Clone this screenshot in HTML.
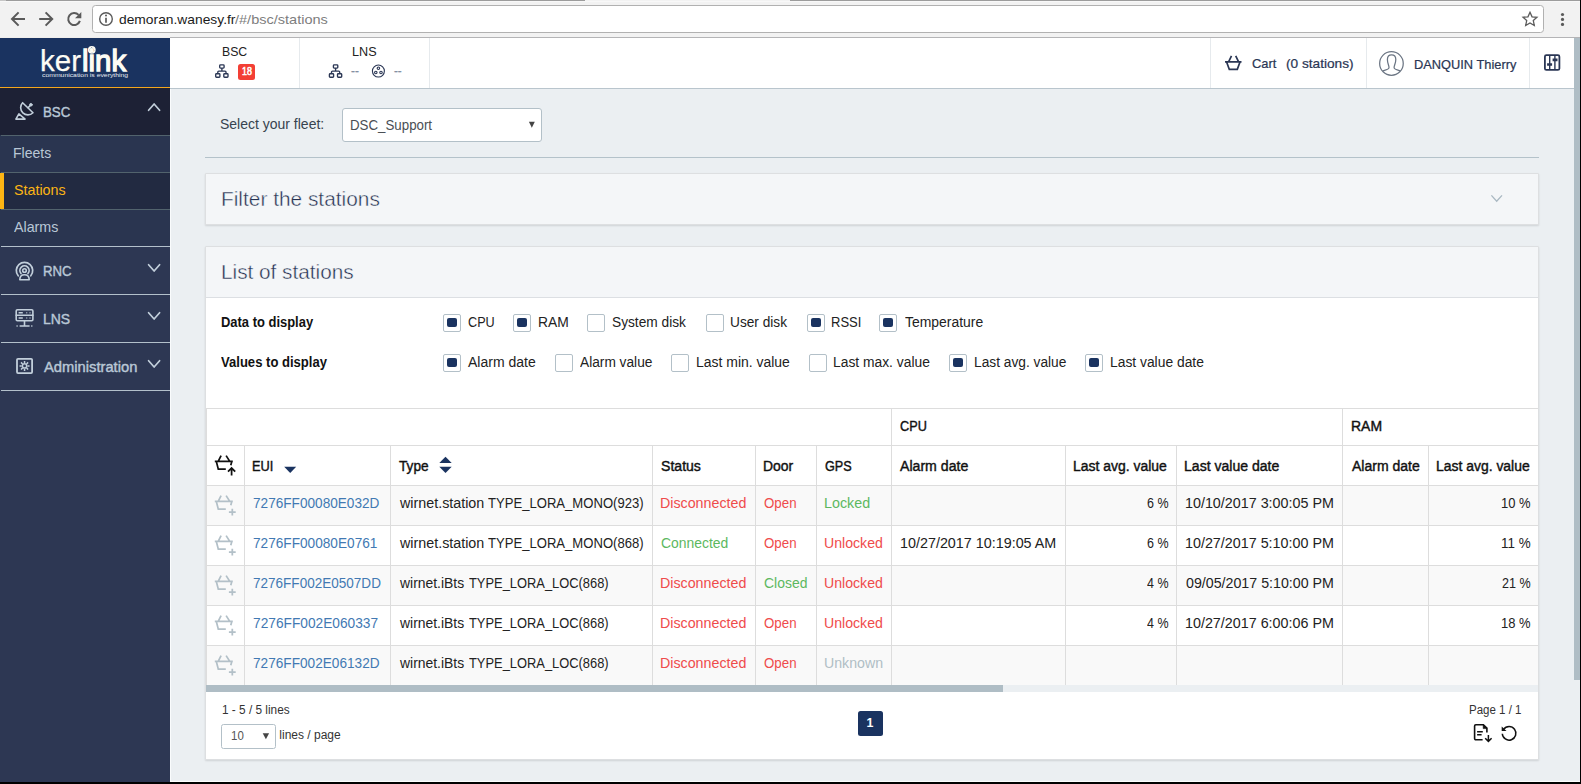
<!DOCTYPE html>
<html lang="en"><head><meta charset="utf-8"><title>Wanesy - Stations</title>
<style>
html,body{margin:0;padding:0;}
body{width:1581px;height:784px;overflow:hidden;position:relative;background:#ebeff2;font-family:"Liberation Sans",sans-serif;}
.a{position:absolute;box-sizing:border-box;}
.t{position:absolute;white-space:nowrap;line-height:1;transform-origin:0 50%;font-family:"Liberation Sans",sans-serif;}
svg{position:absolute;overflow:visible;}
.cb{position:absolute;box-sizing:border-box;width:18px;height:18px;border:1px solid #b3c0c8;border-radius:2px;background:#fff;}
.cb.on::after{content:"";position:absolute;left:3px;top:3.2px;width:9.8px;height:9.2px;border-radius:2px;background:#1a3360;}
.vl{position:absolute;width:1px;background:#ddd;}
.hl{position:absolute;height:1px;background:#ddd;}

</style></head>
<body>
<!-- ================= browser chrome ================= -->
<div class="a" style="left:0px;top:0px;width:1581px;height:38px;background:#f2f2f2;"></div>
<div class="a" style="left:0px;top:0px;width:6px;height:1px;background:#c6c6c6;"></div>
<div class="a" style="left:6px;top:0px;width:579px;height:1px;background:#9c9c9c;"></div>
<div class="a" style="left:790px;top:0px;width:790px;height:1px;background:#9c9c9c;"></div>
<div class="a" style="left:0px;top:1px;width:1580px;height:1px;background:#f8f8f8;"></div>
<div class="a" style="left:0px;top:37px;width:170px;height:1px;background:#f0eeec;"></div>
<div class="a" style="left:170px;top:37px;width:1411px;height:1px;background:#b4b4b6;"></div>
<div class="a" style="left:92px;top:5px;width:1452px;height:28px;background:#fff;border:1px solid #b1b1b1;border-radius:3.5px;"></div>
<svg style="left:0;top:0;" width="1581" height="38" viewBox="0 0 1581 38" fill="none" stroke="#5a5a5a" stroke-width="2">
  <path d="M25 19H12.400M18.600 12.400L12 19l6.600 6.600"/>
  <path d="M39.200 19H51.800M45.600 12.400L52.200 19l-6.600 6.600"/>
  <path d="M78.600 14.900A6 6 0 1 0 79.900 20.900"/>
  <path d="M81.300 12v6.300h-6.300z" fill="#5a5a5a" stroke="none"/>
  <circle cx="106" cy="19" r="6.300" stroke-width="1.400"/>
  <path d="M106 17.700v5" stroke-width="1.700"/>
  <circle cx="106" cy="15.400" r="1" fill="#5a5a5a" stroke="none"/>
  <path d="M1530 12.300l2.050 4.500 4.900.500-3.650 3.300 1 4.850-4.300-2.500-4.300 2.500 1-4.850-3.650-3.300 4.900-.500z" stroke-width="1.300"/>
  <g fill="#5a5a5a" stroke="none"><circle cx="1562.500" cy="14.500" r="1.600"/><circle cx="1562.500" cy="19.400" r="1.600"/><circle cx="1562.500" cy="24.400" r="1.600"/></g>
</svg>
<!-- ================= sidebar ================= -->
<div class="a" style="left:0px;top:38px;width:170px;height:49px;background:#1a3360;"></div>
<div class="a" style="left:0px;top:87px;width:170px;height:1px;background:#f3a71d;"></div>
<div class="a" style="left:0px;top:88px;width:170px;height:47px;background:#1d2135;"></div>
<div class="a" style="left:0px;top:135px;width:170px;height:112px;background:#2a3550;"></div>
<div class="a" style="left:0px;top:173px;width:170px;height:36px;background:#222a41;"></div>
<div class="a" style="left:0px;top:173px;width:4px;height:36px;background:#fcb514;"></div>
<div class="a" style="left:0px;top:247px;width:170px;height:535px;background:#2d3753;"></div>
<div class="a" style="left:1px;top:135px;width:169px;height:1px;background:#52636d;"></div>
<div class="a" style="left:1px;top:172px;width:169px;height:1px;background:#52636d;"></div>
<div class="a" style="left:1px;top:209px;width:169px;height:1px;background:#52636d;"></div>
<div class="a" style="left:1px;top:246px;width:169px;height:1px;background:#b3c0cb;"></div>
<div class="a" style="left:1px;top:294px;width:169px;height:1px;background:#b3c0cb;"></div>
<div class="a" style="left:1px;top:342px;width:169px;height:1px;background:#b3c0cb;"></div>
<div class="a" style="left:1px;top:390px;width:169px;height:1px;background:#b3c0cb;"></div>
<svg style="left:87px;top:45px;" width="10" height="10" viewBox="0 0 10 10"><circle cx="4.800" cy="4.800" r="3.900" fill="#fdfcf4"/><path d="M3 4.200l1.600-1.400 1.800 1.200.400 2-1.800 1-1.600-1z" fill="none" stroke="#1a3360" stroke-width=".700"/></svg>
<svg style="left:0;top:88px;" width="170" height="310" viewBox="0 88 170 310" fill="none" stroke="#c2cfdb" stroke-width="1.600" stroke-linecap="round" stroke-linejoin="round">
  <!-- satellite dish -->
  <path d="M22.600 102.700A7.250 7.250 0 0 0 33 112.800z"/>
  <path d="M28.200 107.600l2.200-2.300"/><circle cx="30.900" cy="104.800" r="1.300" fill="#c2cfdb" stroke-width="1"/>
  <path d="M18.900 113.900l-3 5.200h9.200z"/>
  <!-- chevrons -->
  <path d="M148.600 110.300l5.500-6.300 5.500 6.300" stroke-width="1.700"/>
  <path d="M148.600 264.700l5.500 6.300 5.500-6.300" stroke-width="1.700"/>
  <path d="M148.600 312.700l5.500 6.300 5.500-6.300" stroke-width="1.700"/>
  <path d="M148.600 360.700l5.500 6.300 5.500-6.300" stroke-width="1.700"/>
  <!-- RNC -->
  <circle cx="24.500" cy="270.500" r="1.800" stroke-width="1.600"/>
  <path d="M21 273.500A4.600 4.600 0 1 1 28 273.500" stroke-width="1.700"/>
  <path d="M18.200 275.800A8.200 8.200 0 1 1 30.800 275.800" stroke-width="1.700"/>
  <path d="M19.800 279.800C19.800 276.500 21.800 274.700 24.500 274.700S29.200 276.500 29.200 279.800z"/>
  <!-- LNS -->
  <rect x="16.200" y="309.700" width="16.700" height="11.100" rx="1.200"/>
  <path d="M16.200 315.250h16.700"/>
  <path d="M18.600 312.700h4.200M26.400 312.700h.8M29.600 312.700h.8M18.600 318h4.200M26.400 318h.8M29.600 318h.8" stroke-width="1.400" stroke-linecap="butt"/>
  <path d="M24.500 320.800v4.600M19.600 326h10M16.500 326h1.200M31.200 326h1.200" stroke-linecap="butt"/>
  <!-- Administration -->
  <rect x="17" y="358.800" width="15.100" height="14.300" rx="1" stroke-width="1.800"/>
  <circle cx="24.550" cy="365.900" r="2.100" stroke-width="1.400"/>
  <g stroke-width="1.500" stroke-linecap="butt"><path d="M24.550 360.900v2.200M24.550 368.700v2.200M19.550 365.900h2.200M27.350 365.900h2.200M21 362.350l1.560 1.560M26.540 367.890l1.560 1.560M28.100 362.350l-1.560 1.560M22.560 367.890l-1.560 1.560"/></g>
</svg>
<!-- ================= header ================= -->
<div class="a" style="left:170px;top:38px;width:1404px;height:50px;background:#fff;"></div>
<div class="a" style="left:170px;top:88px;width:1404px;height:1px;background:#b9c5cd;"></div>
<div class="a" style="left:299px;top:38px;width:1px;height:50px;background:#e6eaed;"></div>
<div class="a" style="left:429px;top:38px;width:1px;height:50px;background:#e6eaed;"></div>
<div class="a" style="left:1210px;top:38px;width:1px;height:50px;background:#e6eaed;"></div>
<div class="a" style="left:1366px;top:38px;width:1px;height:50px;background:#e6eaed;"></div>
<div class="a" style="left:1529px;top:38px;width:1px;height:50px;background:#e6eaed;"></div>
<div class="a" style="left:238px;top:64px;width:17px;height:16px;background:#f33f35;border-radius:2.500px;"></div>
<svg style="left:170px;top:38px;" width="1404" height="50" viewBox="170 38 1404 50" fill="none" stroke="#2a3654" stroke-width="1.350">
  <g><rect x="219.700" y="64.900" width="4.400" height="3.200" rx=".800"/><rect x="215.700" y="73.700" width="4.200" height="3.500" rx=".800"/><rect x="223.800" y="73.700" width="4.200" height="3.500" rx=".800"/><path d="M221.900 68.100v3M217.800 73.700v-1.600a1 1 0 0 1 1-1h6.200a1 1 0 0 1 1 1v1.600"/></g>
  <g transform="translate(113.700 0)"><rect x="219.700" y="64.900" width="4.400" height="3.200" rx=".800"/><rect x="215.700" y="73.700" width="4.200" height="3.500" rx=".800"/><rect x="223.800" y="73.700" width="4.200" height="3.500" rx=".800"/><path d="M221.900 68.100v3M217.800 73.700v-1.600a1 1 0 0 1 1-1h6.200a1 1 0 0 1 1 1v1.600"/></g>
  <circle cx="378.400" cy="71.050" r="6" stroke-width="1.100"/>
  <g stroke-width="1.100"><circle cx="378.400" cy="68.300" r="1.250"/><circle cx="375.800" cy="72.500" r="1.250"/><circle cx="381" cy="72.500" r="1.250"/></g>
  <!-- cart -->
  <path d="M1225 61.900h16.500M1226.600 62l2.700 7.300h8l2.700-7.300M1228.700 61.600l2.800-5.800M1238.500 61.600l-2.800-5.800" stroke-width="1.700"/>
  <!-- user -->
  <g stroke="#6b7583" stroke-width="1.250"><circle cx="1391.450" cy="63.450" r="11.800"/>
  <path d="M1382.900 70.900C1385 69.900 1388.900 69.600 1389 67.700C1389.100 65.600 1387.400 63.500 1387.400 59.400C1387.400 56.200 1389 54.800 1391.600 54.800S1395.800 56.200 1395.800 59.400C1395.800 63.500 1394 65.600 1394.100 67.700C1394.200 69.600 1398.200 69.900 1400.300 70.900"/></g>
  <!-- sliders icon -->
  <rect x="1544.900" y="55.200" width="14.500" height="14.700" rx="1.500" stroke-width="1.800"/>
  <path d="M1549.700 55.500v14.200M1554.900 55.500v14.200" stroke-width="1.400"/>
  <path d="M1552.600 59.900h4.900M1547.100 64.500h5" stroke-width="2.600"/>
</svg>
<div class="a" style="left:170px;top:89px;width:1px;height:693px;background:#fafcfd;"></div>
<!-- ================= page scrollbar / edges ================= -->
<div class="a" style="left:1574px;top:38px;width:6px;height:642px;background:#afbdc5;"></div>
<div class="a" style="left:1580px;top:0px;width:1px;height:784px;background:#000;"></div>
<div class="a" style="left:170px;top:781px;width:1410px;height:1px;background:#fcfdfd;"></div>
<div class="a" style="left:0px;top:782px;width:1581px;height:2px;background:#000;"></div>
<!-- ================= main ================= -->
<div class="a" style="left:342px;top:108px;width:200px;height:34px;background:#fff;border:1px solid #b3c0c8;border-radius:3px;"></div>
<svg style="left:528px;top:121px;" width="8" height="8" viewBox="0 0 8 8"><path d="M.900.800h5.900L3.850 6.800z" fill="#444"/></svg>
<div class="a" style="left:205px;top:157px;width:1334px;height:1px;background:#b4c2ca;"></div>
<div class="a" style="left:205px;top:173px;width:1334px;height:52px;background:#f4f6f8;border:1px solid #dddfe1;border-radius:1px;box-shadow:0 1px 2px rgba(0,0,0,.12);"></div>
<svg style="left:1488px;top:192px;" width="18" height="14" viewBox="1488 192 18 14" fill="none" stroke="#a9b8c2" stroke-width="1.300"><path d="M1491.400 195.400l5.300 5.900 5.300-5.900"/></svg>
<div class="a" style="left:205px;top:246px;width:1334px;height:514px;background:#fff;border:1px solid #dddfe1;border-radius:1px;box-shadow:0 1px 2px rgba(0,0,0,.12);"></div>
<div class="a" style="left:206px;top:247px;width:1332px;height:50px;background:#f4f6f8;"></div>
<div class="a" style="left:206px;top:297px;width:1332px;height:1px;background:#dcdfe3;"></div>
<!-- checkboxes -->
<div class="cb on" style="left:443px;top:314px;"></div>
<div class="cb on" style="left:513px;top:314px;"></div>
<div class="cb" style="left:587px;top:314px;"></div>
<div class="cb" style="left:706px;top:314px;"></div>
<div class="cb on" style="left:807px;top:314px;"></div>
<div class="cb on" style="left:879px;top:314px;"></div>
<div class="cb on" style="left:443px;top:354px;"></div>
<div class="cb" style="left:555px;top:354px;"></div>
<div class="cb" style="left:671px;top:354px;"></div>
<div class="cb" style="left:809px;top:354px;"></div>
<div class="cb on" style="left:949px;top:354px;"></div>
<div class="cb on" style="left:1085px;top:354px;"></div>
<!-- table -->
<div class="a" style="left:207px;top:486px;width:1331px;height:39px;background:#f9f9f9;"></div>
<div class="a" style="left:207px;top:566px;width:1331px;height:39px;background:#f9f9f9;"></div>
<div class="a" style="left:207px;top:646px;width:1331px;height:39px;background:#f9f9f9;"></div>
<div class="hl" style="left:206px;top:408px;width:1332px;"></div>
<div class="hl" style="left:206px;top:445px;width:1332px;"></div>
<div class="hl" style="left:206px;top:485px;width:1332px;"></div>
<div class="hl" style="left:206px;top:525px;width:1332px;"></div>
<div class="hl" style="left:206px;top:565px;width:1332px;"></div>
<div class="hl" style="left:206px;top:605px;width:1332px;"></div>
<div class="hl" style="left:206px;top:645px;width:1332px;"></div>
<div class="hl" style="left:206px;top:685px;width:1332px;"></div>
<div class="vl" style="left:206px;top:408px;height:277px;"></div>
<div class="vl" style="left:244px;top:445px;height:240px;"></div>
<div class="vl" style="left:390px;top:445px;height:240px;"></div>
<div class="vl" style="left:652px;top:445px;height:240px;"></div>
<div class="vl" style="left:755px;top:445px;height:240px;"></div>
<div class="vl" style="left:816px;top:445px;height:240px;"></div>
<div class="vl" style="left:891px;top:408px;height:277px;"></div>
<div class="vl" style="left:1065px;top:445px;height:240px;"></div>
<div class="vl" style="left:1176px;top:445px;height:240px;"></div>
<div class="vl" style="left:1342px;top:408px;height:277px;"></div>
<div class="vl" style="left:1428px;top:445px;height:240px;"></div>
<div class="a" style="left:206px;top:685px;width:1332px;height:7px;background:#ebeff2;"></div>
<div class="a" style="left:206px;top:685px;width:797px;height:7px;background:#afbdc5;"></div>
<svg style="left:280px;top:452px;" width="180" height="26" viewBox="280 452 180 26" fill="#1a3360"><path d="M284.200 466.800h12l-6 6.200z"/><path d="M439.300 463h12.400l-6.200-6.200z"/><path d="M439.300 466.800h12.400l-6.200 6.200z"/></svg>
<svg style="left:212px;top:452.7px;" width="28" height="26" viewBox="212 452.7 28 26" fill="none" stroke="#111" stroke-width="1.750"><path d="M214.800 461.1H232.800M218.200 461.1L221.100 455.3M229.800 461.1L226.100 455.3M216.300 461.1L218.300 468.9H225.800M231.800 461.1L230.800 465.0"/><path d="M231.600 475.1V468.1M228 471.4L231.600 467.8L235.200 471.4"/></svg>
<svg style="left:212px;top:493.0px;" width="28" height="26" viewBox="212 493.0 28 26" fill="none" stroke="#b3c0c8" stroke-width="1.750"><path d="M214.800 501.4H232.800M218.200 501.4L221.100 495.6M229.800 501.4L226.100 495.6M216.300 501.4L218.300 509.2H225.800M231.800 501.4L230.800 505.3"/><path d="M228.900 512.1H235.700M232.300 508.7V515.5"/></svg>
<svg style="left:212px;top:533.0px;" width="28" height="26" viewBox="212 533.0 28 26" fill="none" stroke="#b3c0c8" stroke-width="1.750"><path d="M214.800 541.4H232.800M218.200 541.4L221.100 535.6M229.800 541.4L226.100 535.6M216.300 541.4L218.300 549.2H225.800M231.800 541.4L230.800 545.3"/><path d="M228.900 552.1H235.700M232.300 548.7V555.5"/></svg>
<svg style="left:212px;top:573.0px;" width="28" height="26" viewBox="212 573.0 28 26" fill="none" stroke="#b3c0c8" stroke-width="1.750"><path d="M214.800 581.4H232.800M218.200 581.4L221.100 575.6M229.800 581.4L226.100 575.6M216.300 581.4L218.300 589.2H225.800M231.800 581.4L230.800 585.3"/><path d="M228.900 592.1H235.700M232.300 588.7V595.5"/></svg>
<svg style="left:212px;top:613.0px;" width="28" height="26" viewBox="212 613.0 28 26" fill="none" stroke="#b3c0c8" stroke-width="1.750"><path d="M214.800 621.4H232.800M218.200 621.4L221.100 615.6M229.800 621.4L226.100 615.6M216.300 621.4L218.300 629.2H225.800M231.800 621.4L230.800 625.3"/><path d="M228.900 632.1H235.700M232.300 628.7V635.5"/></svg>
<svg style="left:212px;top:653.0px;" width="28" height="26" viewBox="212 653.0 28 26" fill="none" stroke="#b3c0c8" stroke-width="1.750"><path d="M214.800 661.4H232.800M218.200 661.4L221.100 655.6M229.800 661.4L226.100 655.6M216.300 661.4L218.300 669.2H225.800M231.800 661.4L230.800 665.3"/><path d="M228.900 672.1H235.700M232.300 668.7V675.5"/></svg>
<!-- footer -->
<div class="a" style="left:221px;top:724px;width:55px;height:25px;background:#fff;border:1px solid #b3c0c8;border-radius:2.500px;"></div>
<svg style="left:262px;top:732px;" width="8" height="8" viewBox="0 0 8 8"><path d="M.700 1.200h6.400L3.900 7.200z" fill="#444"/></svg>
<div class="a" style="left:858px;top:711px;width:25px;height:25px;background:#1a3360;border-radius:2.500px;"></div>
<svg style="left:1470px;top:720px;" width="52" height="26" viewBox="1470 720 52 26" fill="none" stroke="#111" stroke-width="1.600">
<path d="M1482.600 739.800h-6.800a1.200 1.200 0 0 1-1.200-1.200v-12.600a1.200 1.200 0 0 1 1.200-1.200h7.600l3.500 3.300v4.500"/>
<path d="M1483.200 724.900v3.700h3.700z" fill="#111" stroke-width=".600"/>
<path d="M1477.100 731.700h5.700M1477.100 734.700h4.500" stroke-width="1.400"/>
<path d="M1488.400 735.100v6M1485.200 738.300l3.200 3.100 3.200-3.100" stroke-width="1.500"/>
<path d="M1502.300 733.700A6.800 6.800 0 1 0 1503.600 729.300" stroke-width="1.500"/>
<path d="M1501.700 726.500v4.600h4.800z" fill="#111" stroke="none"/>
</svg>

<div id="txt">
<span class="t" style="left:119.30px;top:13.04px;font-size:13.3px;color:#1b1b1b;transform:scaleX(1.0385);">demoran.wanesy.fr</span><span class="t" style="left:235.00px;top:13.04px;font-size:13.3px;color:#7d7d7d;transform:scaleX(1.0920);">/#/bsc/stations</span>
<span class="t" style="left:40.01px;top:45.54px;font-size:29.6px;color:#fdfcf4;transform:scaleX(0.9960);-webkit-text-stroke:0.25px #fdfcf4;">ker</span><span class="t" style="left:82.21px;top:45.54px;font-size:29.6px;color:#fdfcf4;transform:scaleX(0.9928);-webkit-text-stroke:1.3px #fdfcf4;">link</span>
<span class="t" style="left:42.10px;top:72.99px;font-size:5.8px;color:#e8ecf2;transform:scaleX(1.1781);">communication is everything</span>
<span class="t" style="left:221.86px;top:44.80px;font-size:13px;color:#222;transform:scaleX(0.9431);">BSC</span>
<span class="t" style="left:241.70px;top:65.93px;font-size:10.6px;color:#fff;transform:scaleX(0.8409);-webkit-text-stroke:0.55px #fff;">18</span>
<span class="t" style="left:351.73px;top:44.80px;font-size:13px;color:#222;transform:scaleX(0.9708);">LNS</span>
<span class="t" style="left:351.30px;top:63.80px;font-size:13px;color:#838fa1;transform:scaleX(0.9005);-webkit-text-stroke:0.3px #838fa1;">--</span>
<span class="t" style="left:394.40px;top:63.80px;font-size:13px;color:#838fa1;transform:scaleX(0.8885);-webkit-text-stroke:0.3px #838fa1;">--</span>
<span class="t" style="left:1251.90px;top:56.60px;font-size:13px;color:#2a3654;transform:scaleX(0.9901);-webkit-text-stroke:0.22px #2a3654;">Cart</span>
<span class="t" style="left:1286.00px;top:56.60px;font-size:13px;color:#2a3654;transform:scaleX(1.0504);-webkit-text-stroke:0.22px #2a3654;">(0 stations)</span>
<span class="t" style="left:1413.51px;top:58.00px;font-size:13px;color:#2a3654;transform:scaleX(0.9864);-webkit-text-stroke:0.22px #2a3654;">DANQUIN Thierry</span>
<span class="t" style="left:42.80px;top:105.05px;font-size:14px;color:#b9c7d6;transform:scaleX(0.9503);-webkit-text-stroke:0.4px #b9c7d6;">BSC</span>
<span class="t" style="left:13.43px;top:146.03px;font-size:14.5px;color:#b9c7d6;transform:scaleX(0.9677);">Fleets</span>
<span class="t" style="left:14.30px;top:182.63px;font-size:14.5px;color:#fcb514;transform:scaleX(0.9858);">Stations</span>
<span class="t" style="left:14.20px;top:219.63px;font-size:14.5px;color:#b9c7d6;transform:scaleX(0.9830);">Alarms</span>
<span class="t" style="left:42.76px;top:264.15px;font-size:14px;color:#b9c7d6;transform:scaleX(0.9411);-webkit-text-stroke:0.4px #b9c7d6;">RNC</span>
<span class="t" style="left:42.70px;top:312.35px;font-size:14px;color:#b9c7d6;transform:scaleX(0.9963);-webkit-text-stroke:0.4px #b9c7d6;">LNS</span>
<span class="t" style="left:43.70px;top:359.95px;font-size:14px;color:#b9c7d6;transform:scaleX(1.0521);-webkit-text-stroke:0.4px #b9c7d6;">Administration</span>
<span class="t" style="left:220.10px;top:117.25px;font-size:14px;color:#37434f;transform:scaleX(0.9992);">Select your fleet:</span>
<span class="t" style="left:349.95px;top:118.15px;font-size:14px;color:#4a4f55;transform:scaleX(0.9498);">DSC_Support</span>
<span class="t" style="left:221.08px;top:188.73px;font-size:20.4px;color:#243050;transform:scaleX(1.0229);-webkit-text-stroke:0.42px #f4f6f8;">Filter the stations</span>
<span class="t" style="left:221.08px;top:261.93px;font-size:20.4px;color:#243050;transform:scaleX(1.0175);-webkit-text-stroke:0.42px #f4f6f8;">List of stations</span>
<span class="t" style="left:221.40px;top:314.95px;font-size:14px;color:#111;font-weight:700;transform:scaleX(0.9249);">Data to display</span>
<span class="t" style="left:221.40px;top:354.95px;font-size:14px;color:#111;font-weight:700;transform:scaleX(0.9331);">Values to display</span>
<span class="t" style="left:468.00px;top:314.95px;font-size:14px;color:#222;transform:scaleX(0.9033);">CPU</span>
<span class="t" style="left:537.91px;top:314.95px;font-size:14px;color:#222;transform:scaleX(0.9882);">RAM</span>
<span class="t" style="left:612.10px;top:314.95px;font-size:14px;color:#222;transform:scaleX(0.9796);">System disk</span>
<span class="t" style="left:730.02px;top:314.95px;font-size:14px;color:#222;transform:scaleX(0.9770);">User disk</span>
<span class="t" style="left:830.77px;top:314.95px;font-size:14px;color:#222;transform:scaleX(0.9290);">RSSI</span>
<span class="t" style="left:904.80px;top:314.95px;font-size:14px;color:#222;transform:scaleX(0.9948);">Temperature</span>
<span class="t" style="left:468.00px;top:354.95px;font-size:14px;color:#222;">Alarm date</span>
<span class="t" style="left:580.00px;top:354.95px;font-size:14px;color:#222;transform:scaleX(0.9793);">Alarm value</span>
<span class="t" style="left:695.90px;top:354.95px;font-size:14px;color:#222;transform:scaleX(0.9971);">Last min. value</span>
<span class="t" style="left:833.31px;top:354.95px;font-size:14px;color:#222;transform:scaleX(0.9881);">Last max. value</span>
<span class="t" style="left:973.62px;top:354.95px;font-size:14px;color:#222;transform:scaleX(0.9809);">Last avg. value</span>
<span class="t" style="left:1110.01px;top:354.95px;font-size:14px;color:#222;transform:scaleX(0.9886);">Last value date</span>
<span class="t" style="left:900.20px;top:418.85px;font-size:14px;color:#111;transform:scaleX(0.9067);-webkit-text-stroke:0.4px #111;">CPU</span>
<span class="t" style="left:1350.50px;top:418.85px;font-size:14px;color:#111;transform:scaleX(0.9984);-webkit-text-stroke:0.4px #111;">RAM</span>
<span class="t" style="left:252.29px;top:459.15px;font-size:14px;color:#111;transform:scaleX(0.9138);-webkit-text-stroke:0.4px #111;">EUI</span>
<span class="t" style="left:399.00px;top:459.15px;font-size:14px;color:#111;transform:scaleX(0.9750);-webkit-text-stroke:0.4px #111;">Type</span>
<span class="t" style="left:661.10px;top:459.15px;font-size:14px;color:#111;transform:scaleX(1.0053);-webkit-text-stroke:0.4px #111;">Status</span>
<span class="t" style="left:763.41px;top:459.15px;font-size:14px;color:#111;transform:scaleX(0.9938);-webkit-text-stroke:0.4px #111;">Door</span>
<span class="t" style="left:825.40px;top:459.15px;font-size:14px;color:#111;transform:scaleX(0.9033);-webkit-text-stroke:0.4px #111;">GPS</span>
<span class="t" style="left:900.20px;top:459.15px;font-size:14px;color:#111;transform:scaleX(1.0087);-webkit-text-stroke:0.4px #111;">Alarm date</span>
<span class="t" style="left:1073.40px;top:459.15px;font-size:14px;color:#111;transform:scaleX(0.9969);-webkit-text-stroke:0.4px #111;">Last avg. value</span>
<span class="t" style="left:1184.20px;top:459.15px;font-size:14px;color:#111;transform:scaleX(1.0035);-webkit-text-stroke:0.4px #111;">Last value date</span>
<span class="t" style="left:1351.50px;top:459.15px;font-size:14px;color:#111;transform:scaleX(1.0013);-webkit-text-stroke:0.4px #111;">Alarm date</span>
<span class="t" style="left:1436.41px;top:459.15px;font-size:14px;color:#111;transform:scaleX(0.9948);-webkit-text-stroke:0.4px #111;">Last avg. value</span>
<span class="t" style="left:253.10px;top:495.95px;font-size:14px;color:#4279b3;transform:scaleX(0.9725);">7276FF00080E032D</span>
<span class="t" style="left:400.02px;top:495.95px;font-size:14px;color:#222;transform:scaleX(1.0218);">wirnet.station</span>
<span class="t" style="left:487.60px;top:495.95px;font-size:14px;color:#222;transform:scaleX(0.9347);">TYPE_LORA_MONO(923)</span>
<span class="t" style="left:660.08px;top:495.95px;font-size:14px;color:#ef4b4b;transform:scaleX(1.0176);">Disconnected</span>
<span class="t" style="left:764.40px;top:495.95px;font-size:14px;color:#ef4b4b;transform:scaleX(0.9503);">Open</span>
<span class="t" style="left:824.38px;top:495.95px;font-size:14px;color:#5cb860;transform:scaleX(1.0217);">Locked</span>
<span class="t" style="left:1146.70px;top:495.95px;font-size:14px;color:#222;transform:scaleX(0.8912);">6 %</span>
<span class="t" style="left:1184.58px;top:495.95px;font-size:14px;color:#222;transform:scaleX(1.0230);">10/10/2017 3:00:05 PM</span>
<span class="t" style="left:1501.47px;top:495.95px;font-size:14px;color:#222;transform:scaleX(0.9257);">10 %</span>
<span class="t" style="left:253.10px;top:535.95px;font-size:14px;color:#4279b3;transform:scaleX(0.9744);">7276FF00080E0761</span>
<span class="t" style="left:400.02px;top:535.95px;font-size:14px;color:#222;transform:scaleX(1.0218);">wirnet.station</span>
<span class="t" style="left:487.60px;top:535.95px;font-size:14px;color:#222;transform:scaleX(0.9347);">TYPE_LORA_MONO(868)</span>
<span class="t" style="left:661.10px;top:535.95px;font-size:14px;color:#5cb860;transform:scaleX(0.9936);">Connected</span>
<span class="t" style="left:764.40px;top:535.95px;font-size:14px;color:#ef4b4b;transform:scaleX(0.9503);">Open</span>
<span class="t" style="left:824.39px;top:535.95px;font-size:14px;color:#ef4b4b;transform:scaleX(1.0092);">Unlocked</span>
<span class="t" style="left:899.68px;top:535.95px;font-size:14px;color:#222;transform:scaleX(1.0245);">10/27/2017 10:19:05 AM</span>
<span class="t" style="left:1146.70px;top:535.95px;font-size:14px;color:#222;transform:scaleX(0.8912);">6 %</span>
<span class="t" style="left:1184.58px;top:535.95px;font-size:14px;color:#222;transform:scaleX(1.0230);">10/27/2017 5:10:00 PM</span>
<span class="t" style="left:1501.44px;top:535.95px;font-size:14px;color:#222;transform:scaleX(0.9584);">11 %</span>
<span class="t" style="left:253.10px;top:575.95px;font-size:14px;color:#4279b3;transform:scaleX(0.9667);">7276FF002E0507DD</span>
<span class="t" style="left:399.99px;top:575.95px;font-size:14px;color:#222;transform:scaleX(0.9928);">wirnet.iBts</span>
<span class="t" style="left:468.60px;top:575.95px;font-size:14px;color:#222;transform:scaleX(0.9201);">TYPE_LORA_LOC(868)</span>
<span class="t" style="left:660.08px;top:575.95px;font-size:14px;color:#ef4b4b;transform:scaleX(1.0176);">Disconnected</span>
<span class="t" style="left:764.40px;top:575.95px;font-size:14px;color:#5cb860;transform:scaleX(0.9955);">Closed</span>
<span class="t" style="left:824.39px;top:575.95px;font-size:14px;color:#ef4b4b;transform:scaleX(1.0092);">Unlocked</span>
<span class="t" style="left:1146.70px;top:575.95px;font-size:14px;color:#222;transform:scaleX(0.8912);">4 %</span>
<span class="t" style="left:1185.60px;top:575.95px;font-size:14px;color:#222;transform:scaleX(1.0159);">09/05/2017 5:10:00 PM</span>
<span class="t" style="left:1502.40px;top:575.95px;font-size:14px;color:#222;transform:scaleX(0.8963);">21 %</span>
<span class="t" style="left:253.10px;top:615.95px;font-size:14px;color:#4279b3;transform:scaleX(0.9799);">7276FF002E060337</span>
<span class="t" style="left:399.99px;top:615.95px;font-size:14px;color:#222;transform:scaleX(0.9928);">wirnet.iBts</span>
<span class="t" style="left:468.60px;top:615.95px;font-size:14px;color:#222;transform:scaleX(0.9201);">TYPE_LORA_LOC(868)</span>
<span class="t" style="left:660.08px;top:615.95px;font-size:14px;color:#ef4b4b;transform:scaleX(1.0176);">Disconnected</span>
<span class="t" style="left:764.40px;top:615.95px;font-size:14px;color:#ef4b4b;transform:scaleX(0.9503);">Open</span>
<span class="t" style="left:824.39px;top:615.95px;font-size:14px;color:#ef4b4b;transform:scaleX(1.0092);">Unlocked</span>
<span class="t" style="left:1146.70px;top:615.95px;font-size:14px;color:#222;transform:scaleX(0.8912);">4 %</span>
<span class="t" style="left:1184.58px;top:615.95px;font-size:14px;color:#222;transform:scaleX(1.0230);">10/27/2017 6:00:06 PM</span>
<span class="t" style="left:1501.47px;top:615.95px;font-size:14px;color:#222;transform:scaleX(0.9257);">18 %</span>
<span class="t" style="left:253.10px;top:655.95px;font-size:14px;color:#4279b3;transform:scaleX(0.9740);">7276FF002E06132D</span>
<span class="t" style="left:399.99px;top:655.95px;font-size:14px;color:#222;transform:scaleX(0.9928);">wirnet.iBts</span>
<span class="t" style="left:468.60px;top:655.95px;font-size:14px;color:#222;transform:scaleX(0.9201);">TYPE_LORA_LOC(868)</span>
<span class="t" style="left:660.08px;top:655.95px;font-size:14px;color:#ef4b4b;transform:scaleX(1.0176);">Disconnected</span>
<span class="t" style="left:764.40px;top:655.95px;font-size:14px;color:#ef4b4b;transform:scaleX(0.9503);">Open</span>
<span class="t" style="left:824.39px;top:655.95px;font-size:14px;color:#b0bec5;transform:scaleX(1.0110);">Unknown</span>
<span class="t" style="left:221.60px;top:703.64px;font-size:12px;color:#333;transform:scaleX(0.9840);">1 - 5 / 5 lines</span>
<span class="t" style="left:231.00px;top:729.99px;font-size:12.3px;color:#555;transform:scaleX(0.9322);">10</span>
<span class="t" style="left:279.30px;top:729.34px;font-size:12px;color:#333;">lines / page</span>
<span class="t" style="left:866.50px;top:716.70px;font-size:12.4px;color:#fff;font-weight:700;">1</span>
<span class="t" style="left:1468.90px;top:703.74px;font-size:12px;color:#333;transform:scaleX(0.9594);">Page 1 / 1</span>
</div>
</body></html>
